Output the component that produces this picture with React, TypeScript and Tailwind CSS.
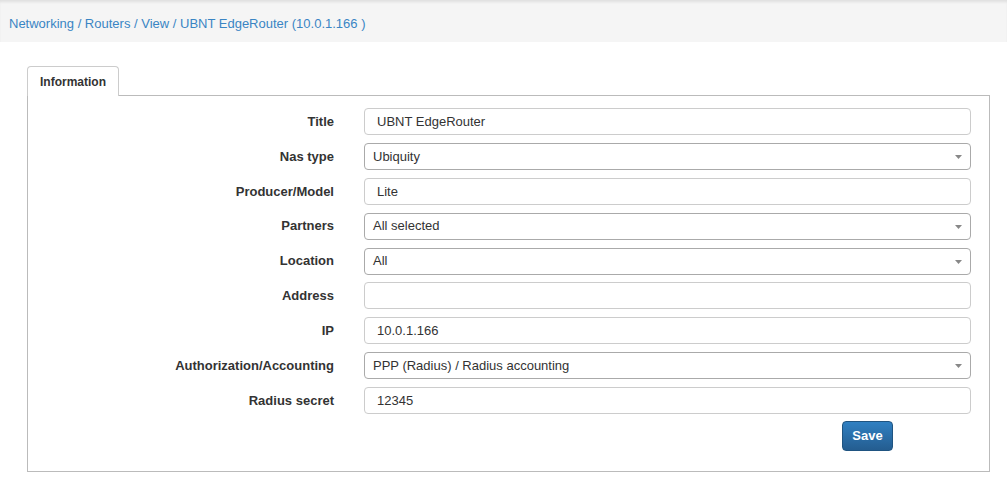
const FIELDS: { label: string; value: string; select?: boolean }[] = [
  { label: "Title", value: "UBNT EdgeRouter" },
  { label: "Nas type", value: "Ubiquity", select: true },
  { label: "Producer/Model", value: "Lite" },
  { label: "Partners", value: "All selected", select: true },
  { label: "Location", value: "All", select: true },
  { label: "Address", value: "" },
  { label: "IP", value: "10.0.1.166" },
  { label: "Authorization/Accounting", value: "PPP (Radius) / Radius accounting", select: true },
  { label: "Radius secret", value: "12345" },
];

function Caret() {
  return (
    <svg width="7" height="4" viewBox="0 0 7 4" className="absolute right-[8px] top-[11px]">
      <path d="M0 0 H7 L3.5 4 Z" fill="#888" />
    </svg>
  );
}

function FieldRow({ label, value, select }: { label: string; value: string; select?: boolean }) {
  return (
    <div className="flex h-[27px] items-center">
      <div className="w-[306px] text-right text-[13px] font-bold text-[#333]">{label}</div>
      <div className="ml-[30px] flex-1">
        {select ? (
          <div className="relative flex h-[27px] items-center rounded-[4px] border border-[#aaa] bg-white pl-[8px] text-[13px] text-[#333]">
            {value}
            <Caret />
          </div>
        ) : (
          <div className="flex h-[27px] items-center rounded-[4px] border border-[#ccc] bg-white pl-[12px] text-[13px] text-[#333]">
            {value}
          </div>
        )}
      </div>
    </div>
  );
}

export default function App() {
  return (
    <div className="h-[486px] w-[1007px] bg-white" style={{ fontFamily: "'Liberation Sans', Arial, sans-serif" }}>
      <div className="flex h-[42px] items-center bg-[#f5f5f5] pl-[9px] pt-[5px] text-[13px] text-[#3a85c4] shadow-[inset_0_3px_3px_-1px_rgba(0,0,0,0.09)]">
        Networking / Routers / View / UBNT EdgeRouter (10.0.1.166 )
      </div>

      <div className="ml-[27px] mt-[24px] w-[963px]">
        <div className="relative z-10 -mb-px flex">
          <div className="flex h-[30px] w-[92px] items-center rounded-t-[4px] border border-b-0 border-[#ccc] bg-white pl-[12px] text-[12px] font-bold text-[#333]">
            Information
          </div>
        </div>
        <div className="border border-[#bbb] pb-[20px] pr-[18px] pt-[12px]">
          <div className="flex flex-col gap-[7.9px]">
            {FIELDS.map((f) => (
              <FieldRow key={f.label} {...f} />
            ))}
          </div>
          <div className="mt-[7px] flex justify-end pr-[78px]">
            <button
              type="button"
              className="h-[30px] w-[51px] rounded-[4px] border border-[#1f5481] bg-gradient-to-b from-[#3080c2] to-[#245d90] text-[13px] font-bold text-white"
            >
              Save
            </button>
          </div>
        </div>
      </div>
    </div>
  );
}
